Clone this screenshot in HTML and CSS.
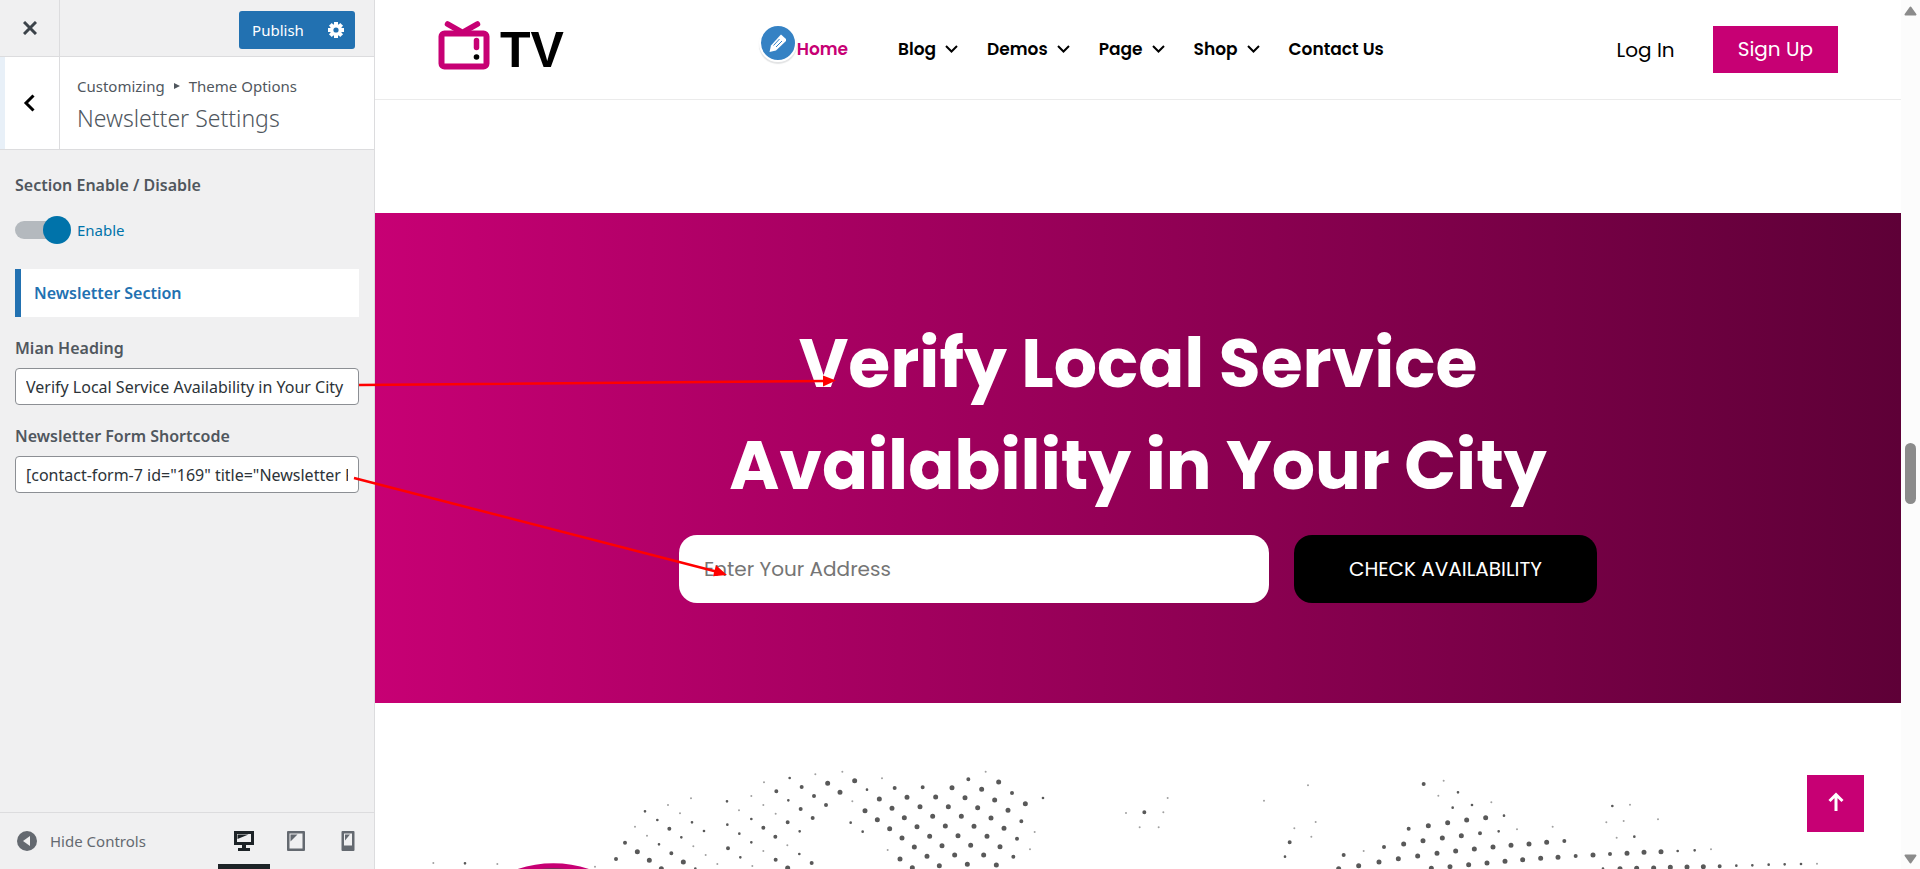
FILE: index.html
```html
<!DOCTYPE html>
<html lang="en">
<head>
    <meta charset="UTF-8">
    <meta name="viewport" content="width=device-width, initial-scale=1.0">
    <title>Customize: Newsletter Settings</title>
    <link rel="stylesheet" href="styles.css">
</head>
<body>

<div class="customizer">
    <!-- Controls sidebar -->
    <form class="sidebar">
        <div class="topbar">
            <button type="button" class="close" aria-label="Close">
                <svg width="14" height="14" viewBox="0 0 14 14"><path d="M1 1l12 12M13 1L1 13" stroke="#3c434a" stroke-width="3" fill="none"/></svg>
            </button>
            <div class="publish">
                <button type="button" class="publish-button">Publish</button>
                <button type="button" class="publish-settings" aria-label="Publish settings">
                    <svg width="18" height="18" viewBox="-9 -9 18 18">
                        <g fill="#fff">
                            <rect x="-2" y="-8" width="4" height="16"/>
                            <rect x="-2" y="-8" width="4" height="16" transform="rotate(45)"/>
                            <rect x="-2" y="-8" width="4" height="16" transform="rotate(90)"/>
                            <rect x="-2" y="-8" width="4" height="16" transform="rotate(135)"/>
                            <circle r="6"/>
                        </g>
                        <circle r="2.6" fill="#2271b1"/>
                    </svg>
                </button>
            </div>
        </div>

        <div class="section-title">
            <button type="button" class="back" aria-label="Back">
                <svg width="12" height="18" viewBox="0 0 12 18"><path d="M10.500 1.500L3 9l7.500 7.500" stroke="#000" stroke-width="3" fill="none"/></svg>
            </button>
            <div class="section-text">
                <div class="crumbs">Customizing <svg width="6" height="6" viewBox="0 0 6 6"><path d="M0 0l6 3-6 3z" fill="#50575e"/></svg> Theme Options</div>
                <h1>Newsletter Settings</h1>
            </div>
        </div>

        <div class="controls">
            <div class="control-title">Section Enable / Disable</div>
            <label class="toggle">
                <input type="checkbox" checked>
                <span>Enable</span>
            </label>
            <div class="notice">Newsletter Section</div>
            <div class="control">
                <label for="main_heading">Mian Heading</label>
                <input type="text" id="main_heading" value="Verify Local Service Availability in Your City">
            </div>
            <div class="control">
                <label for="shortcode">Newsletter Form Shortcode</label>
                <input type="text" id="shortcode" value="[contact-form-7 id=&quot;169&quot; title=&quot;Newsletter Form&quot;]">
            </div>
        </div>

        <div class="sidebar-footer">
            <button type="button" class="collapse">
                <svg width="20" height="20" viewBox="0 0 20 20"><circle cx="10" cy="10" r="10" fill="#646970"/><path d="M13 5v10l-7-5z" fill="#f0f0f1"/></svg>
                Hide Controls
            </button>
            <div class="devices">
                <button type="button" class="device active" aria-label="Desktop">
                    <svg width="22" height="22" viewBox="0 0 22 22"><path d="M1 1h20v14H13v3h4v3H5v-3h4v-3H1zM4 4v8h14V4z" fill="#1d2327" fill-rule="evenodd"/><path d="M4.500 4.500h11l-11 4.500z" fill="#1d2327"/></svg>
                </button>
                <button type="button" class="device" aria-label="Tablet">
                    <svg width="22" height="22" viewBox="0 0 22 22"><path d="M3 1h16a1 1 0 0 1 1 1v18a1 1 0 0 1-1 1H3a1 1 0 0 1-1-1V2a1 1 0 0 1 1-1zM4.500 3.500v15h13v-15z" fill="#646970" fill-rule="evenodd"/><path d="M5.500 4.500h7l-7 7z" fill="#646970"/></svg>
                </button>
                <button type="button" class="device" aria-label="Mobile">
                    <svg width="22" height="22" viewBox="0 0 22 22"><path d="M5.500 1h11a1 1 0 0 1 1 1v18a1 1 0 0 1-1 1h-11a1 1 0 0 1-1-1V2a1 1 0 0 1 1-1zM7 3.500v12h8v-12z" fill="#646970" fill-rule="evenodd"/><path d="M8 4.500h5l-5 6z" fill="#646970"/></svg>
                </button>
            </div>
        </div>
    </form>

    <!-- Site preview -->
    <main class="preview">
        <header class="site-header">
            <a href="#" class="logo">
                <svg width="52" height="50" viewBox="0 0 52 50">
                    <g fill="none" stroke="#c70074" stroke-linecap="round">
                        <path d="M9.500 4l15 8.500 15-8.500" stroke-width="5.500"/>
                        <rect x="3.500" y="13.500" width="45" height="33" rx="3" stroke-width="6"/>
                        <path d="M38.500 20.500v7" stroke-width="5.500"/>
                    </g>
                    <circle cx="38.500" cy="37" r="2.800"/>
                </svg>
                <span>TV</span>
            </a>
            <nav class="menu">
                <div class="menu-home">
                    <button type="button" class="edit" aria-label="Edit menu">
                        <svg width="20" height="20" viewBox="0 0 20 20"><path d="M13 1.500l5 4.500v2L8 17.500l-6.500 1.500L3 12.500 12 2.500z" fill="#fff"/><path d="M5.500 12.500l6-6.500M8 14l6-6" stroke="#3582c4" stroke-width="1.300"/></svg>
                    </button>
                    <a href="#" class="current">Home</a>
                </div>
                <a href="#">Blog <svg width="13" height="8" viewBox="0 0 13 8"><path d="M1 1l5.500 5.500L12 1"/></svg></a>
                <a href="#">Demos <svg width="13" height="8" viewBox="0 0 13 8"><path d="M1 1l5.500 5.500L12 1"/></svg></a>
                <a href="#">Page <svg width="13" height="8" viewBox="0 0 13 8"><path d="M1 1l5.500 5.500L12 1"/></svg></a>
                <a href="#">Shop <svg width="13" height="8" viewBox="0 0 13 8"><path d="M1 1l5.500 5.500L12 1"/></svg></a>
                <a href="#">Contact Us</a>
            </nav>
            <div class="account">
                <a href="#">Log In</a>
                <a href="#" class="signup">Sign Up</a>
            </div>
        </header>

        <section class="newsletter">
            <h2>Verify Local Service<br>Availability in Your City</h2>
            <form class="newsletter-form">
                <input type="text" placeholder="Enter Your Address" aria-label="Address">
                <button type="button">CHECK AVAILABILITY</button>
            </form>
        </section>

        <!-- Dotted world map -->
        <section class="map">
            <svg viewBox="0 0 4578 387">
                <g class="dots">
                    <g transform="translate(135 0)">
                        <path class="lg" d="M652 335h0M688 361h0M724 386h0M790 366h0M1103 384h0"/>
                        <path class="md" d="M615 308h0M1142 207h0M1178 234h0M1067 359h0M748 266h0M1069 154h0M1030 263h0M1145 141h0M1182 168h0M588 357h0M924 325h0M1103 247h0M1066 290h0M1175 369h0M754 340h0"/>
                        <path class="sm" d="M921 184h0M675 214h0M712 240h0M784 292h0M717 313h0M816 247h0M852 273h0M922 254h0M958 281h0M994 237h0M994 307h0M961 352h0M1105 181h0M1109 114h0M1139 274h0M1138 342h0M826 386h0M135 370h0"/>
                        <path class="xs" d="M1032 127h0M1186 103h0M813 175h0M681 287h0M820 319h0M957 211h0M994 168h0M1030 195h0M1067 221h0M1030 333h0M1102 316h0M232 372h0M525 380h0M892 372h0M997 378h0M40 369h0M645 260h0M744 195h0M780 220h0M857 345h0"/>
                    </g>
                    <g transform="translate(1275 0)">
                        <path class="lg" d="M83 130h0M120 157h0M164 122h0M195 212h0M232 239h0M269 266h0M306 294h0M343 321h0M238 177h0M276 205h0M313 233h0M351 260h0M389 289h0M426 317h0M464 345h0M502 373h0M300 357h0M337 383h0M381 349h0M418 377h0M321 172h0M360 200h0M398 229h0M436 258h0M474 287h0M512 316h0M551 345h0M589 375h0M407 171h0M445 200h0M484 229h0M522 259h0M561 289h0M600 320h0M456 143h0M495 173h0M533 203h0M573 234h0M612 265h0M545 148h0M584 180h0M624 211h0M676 191h0M596 126h0"/>
                        <path class="md" d="M651 296h0M664 244h0M636 159h0M640 350h0M505 118h0M284 144h0M78 195h0M368 142h0M1033 217h0"/>
                        <path class="sm" d="M152 248h0M188 275h0M201 149h0M729 174h0"/>
                        <path class="xs" d="M127 95h0M157 184h0M246 115h0M263 330h0M557 95h0M704 276h0M1103 174h0M1090 217h0M978 219h0M1019 262h0M1076 262h0M690 328h0"/>
                    </g>
                    <g transform="translate(2475 0)">
                        <path class="lg" d="M685 257h0M743 248h0M800 240h0M857 233h0M669 302h0M727 294h0M784 287h0M611 312h0M653 348h0M711 340h0M767 333h0M823 327h0M879 321h0M933 316h0M987 312h0M1040 307h0M537 366h0M595 356h0M476 377h0M750 380h0M806 374h0M861 369h0M915 364h0M968 359h0M1022 355h0M1074 352h0M1179 345h0M694 385h0M416 386h0"/>
                        <path class="md" d="M671 132h0M626 266h0M552 321h0M431 345h0M269 307h0M840 280h0M1127 348h0M1093 303h0"/>
                        <path class="sm" d="M774 157h0M758 203h0M896 274h0M255 350h0M816 195h0M912 227h0"/>
                        <path class="xs" d="M491 333h0M347 246h0M731 122h0M874 187h0M283 265h0M334 290h0M192 182h0M324 136h0M715 167h0M1058 260h0M951 268h0"/>
                    </g>
                    <g transform="translate(3555 0)">
                        <path class="lg" d="M201 340h0M252 337h0M303 335h0M230 385h0M281 384h0M331 382h0M381 381h0M430 380h0M180 386h0"/>
                        <path class="md" d="M150 342h0M479 379h0"/>
                        <path class="sm" d="M223 290h0M353 333h0M404 331h0M529 377h0M577 376h0M626 374h0M674 373h0M723 372h0M129 386h0M157 198h0"/>
                        <path class="xs" d="M210 194h0M191 243h0M139 247h0M294 238h0M170 293h0M453 328h0M771 371h0"/>
                    </g>
                </g>
                <circle cx="535" cy="704" r="327" fill="#505050" stroke="#c70074" stroke-width="15"/>
            </svg>
        </section>

        <a href="#" class="to-top" aria-label="Back to top">
            <svg width="16" height="20" viewBox="0 0 16 20"><path d="M8 19V3M1.500 9L8 2.500 14.500 9" stroke="#fff" stroke-width="3" fill="none"/></svg>
        </a>
    </main>

    <div class="scrollbar">
        <svg width="13" height="10" viewBox="0 0 13 10"><path d="M6.500 1.500L11.500 8.500H1.500z" fill="#8b8b8b" stroke="#8b8b8b" stroke-width="2" stroke-linejoin="round"/></svg>
        <div class="track"><div class="thumb"></div></div>
        <svg width="13" height="10" viewBox="0 0 13 10"><path d="M6.500 8.500L11.500 1.500H1.500z" fill="#8b8b8b" stroke="#8b8b8b" stroke-width="2" stroke-linejoin="round"/></svg>
    </div>

    <!-- Pointers from each field to what it changes -->
    <svg class="pointers" width="860" height="620" viewBox="0 0 860 620">
        <g stroke="#f00" stroke-width="2.500">
            <path d="M359 385L825 381M354 478L716 571.500"/>
        </g>
        <path d="M836 380.500l-13 6v-11zM727 575l-14 1.300 3-11z" fill="#f00"/>
    </svg>
</div>

</body>
</html>
```
FILE: styles.css
```css
* {
    box-sizing: border-box;
}

body {
    margin: 0;
    font-family: "Segoe UI", "Noto Sans", sans-serif;
    color: #50575e;
    background-color: #fff;
}

button {
    border: none;
    padding: 0;
    background: none;
    font-family: inherit;
    cursor: pointer;
}

a {
    color: inherit;
    text-decoration: none;
}

svg {
    display: block;
    flex: none;
}

.customizer {
    position: relative;
    display: flex;
    height: 100vh;
    overflow: hidden;
}

/* Sidebar */
.sidebar {
    display: flex;
    flex-direction: column;
    width: 375px;
    flex: none;
    background-color: #f0f0f1;
    border-right: 1px solid #dcdcde;
}

.topbar {
    display: flex;
    justify-content: space-between;
    align-items: center;
    height: 57px;
    padding-right: 19px;
    border-bottom: 1px solid #dcdcde;
}

.close,
.back {
    display: flex;
    align-items: center;
    justify-content: center;
    align-self: stretch;
    width: 60px;
    border-right: 1px solid #dcdcde;
}

.back {
    padding-right: 6px;
    background-color: #fff;
    border-left: 5px solid #e8f0f8;
}

.publish {
    display: flex;
    height: 38px;
    margin-top: 4px;
    border-radius: 3px;
    background-color: #2271b1;
}

.publish-button {
    width: 78px;
    color: #fff;
    font-size: 15px;
}

.publish-settings {
    display: flex;
    align-items: center;
    justify-content: center;
    width: 38px;
}

.section-title {
    display: flex;
    height: 93px;
    background-color: #fff;
    border-bottom: 1px solid #dcdcde;
}

.section-text {
    padding: 17px;
}

.crumbs {
    display: flex;
    align-items: center;
    gap: 9px;
    font-size: 15px;
    line-height: 24px;
}

.section-text h1 {
    margin: 4px 0 0;
    font-size: 23px;
    font-weight: 300;
    line-height: 32px;
}

.controls {
    flex: 1;
    padding: 22px 15px;
    font-size: 16px;
}

.control-title,
.control label {
    display: block;
    font-size: 16px;
    font-weight: 600;
    line-height: 26px;
}

.toggle {
    display: flex;
    align-items: center;
    gap: 6px;
    height: 28px;
    margin: 18px 0 25px;
    color: #0073aa;
    font-size: 15px;
}

.toggle input {
    appearance: none;
    display: flex;
    align-items: center;
    width: 56px;
    height: 28px;
    margin: 0;
}

.toggle input::before {
    content: "";
    flex: none;
    width: 48px;
    height: 18px;
    margin-right: -20px;
    border-radius: 9px;
    background-color: #b4b9be;
}

.toggle input::after {
    content: "";
    flex: none;
    width: 28px;
    height: 28px;
    border-radius: 50%;
    background-color: #0073aa;
}

.notice {
    padding: 0 13px;
    border-left: 6px solid #2271b1;
    background-color: #fff;
    color: #2271b1;
    font-weight: 600;
    line-height: 48px;
}

.control {
    margin-top: 18px;
}

.control input {
    display: block;
    width: 100%;
    height: 37px;
    margin-top: 7px;
    padding: 0 10px;
    border: 1px solid #8c8f94;
    border-radius: 4px;
    background-color: #fff;
    color: #2c3338;
    font-family: inherit;
    font-size: 16px;
}

.sidebar-footer {
    display: flex;
    justify-content: space-between;
    height: 57px;
    border-top: 1px solid #dcdcde;
}

.collapse {
    display: flex;
    align-items: center;
    gap: 13px;
    padding-left: 17px;
    color: #646970;
    font-size: 15px;
}

.devices {
    display: flex;
}

.device {
    display: flex;
    align-items: center;
    justify-content: center;
    width: 52px;
}

.device.active {
    box-shadow: inset 0 -5px #1d2327;
}

/* Preview */
.preview {
    position: relative;
    display: flex;
    flex-direction: column;
    flex: 1;
    overflow: hidden;
    font-family: Poppins, Inter, sans-serif;
    color: #000;
}

.site-header {
    display: flex;
    align-items: center;
    justify-content: space-between;
    height: 100px;
    padding: 0 63px;
    border-bottom: 1px solid #ebebeb;
}

.logo {
    display: flex;
    gap: 10px;
    font-family: "Liberation Sans", Arial, sans-serif;
    font-size: 50px;
    font-weight: 700;
    line-height: 60px;
}

.menu {
    display: flex;
    align-items: center;
    gap: 29px;
    padding-bottom: 2px;
    font-size: 17px;
    font-weight: 600;
}

.menu > a {
    display: flex;
    align-items: center;
    gap: 9px;
}

.menu path {
    fill: none;
    stroke: #000;
    stroke-width: 2;
}

.menu-home {
    position: relative;
    margin-right: 21px;
}

.current {
    color: #c70074;
}

.edit {
    position: absolute;
    right: 100%;
    bottom: 0;
    display: flex;
    align-items: center;
    justify-content: center;
    width: 38px;
    height: 38px;
    border: 2px solid #fff;
    border-radius: 50%;
    background-color: #3582c4;
    box-shadow: 0 2px 1px rgba(60, 67, 74, 0.15);
}

.edit path {
    stroke: none;
    fill: #fff;
}

.edit path + path {
    stroke: #3582c4;
    stroke-width: 1;
}

.account {
    display: flex;
    align-items: center;
    gap: 38px;
    font-size: 20px;
}

.signup {
    padding: 0 25px;
    background-color: #c70074;
    color: #fff;
    line-height: 47px;
}

.newsletter {
    margin-top: 113px;
    padding: 100px 20px;
    background: linear-gradient(90deg, #c70074, #5e0037);
    text-align: center;
}

.newsletter h2 {
    margin: 0 0 18px;
    color: #fff;
    font-size: 68px;
    font-weight: 700;
    line-height: 102px;
}

.newsletter-form {
    display: flex;
    gap: 25px;
    max-width: 918px;
    margin: 0 auto;
}

.newsletter-form input,
.newsletter-form button {
    height: 68px;
    border: none;
    border-radius: 18px;
    font-family: inherit;
    font-size: 20px;
}

.newsletter-form input {
    flex: 1;
    min-width: 0;
    padding: 0 25px;
    background-color: #fff;
}

.newsletter-form input::placeholder {
    color: #757575;
}

.newsletter-form button {
    width: 303px;
    background-color: #000;
    color: #fff;
}

.map {
    margin-top: auto;
}

.map svg {
    width: 100%;
}

.dots {
    fill: none;
    stroke: #595959;
    stroke-linecap: round;
}

.lg {
    stroke-width: 15;
}

.md {
    stroke-width: 12;
}

.sm {
    stroke-width: 8;
}

.xs {
    stroke: #a0a0a0;
    stroke-width: 6;
}

.to-top {
    position: absolute;
    right: 37px;
    bottom: 37px;
    display: flex;
    align-items: center;
    justify-content: center;
    width: 57px;
    height: 57px;
    padding-bottom: 4px;
    background-color: #c70074;
}

/* Scrollbar */
.scrollbar {
    display: flex;
    flex-direction: column;
    align-items: center;
    width: 19px;
    padding: 6px 0 5px;
    background-color: #fcfcfc;
}

.track {
    display: flex;
    flex-direction: column;
    flex: 1;
    padding-top: 427px;
}

.thumb {
    width: 11px;
    height: 61px;
    border-radius: 6px;
    background-color: #8b8b8b;
}

.pointers {
    position: absolute;
    top: 0;
    left: 0;
    pointer-events: none;
}
```
